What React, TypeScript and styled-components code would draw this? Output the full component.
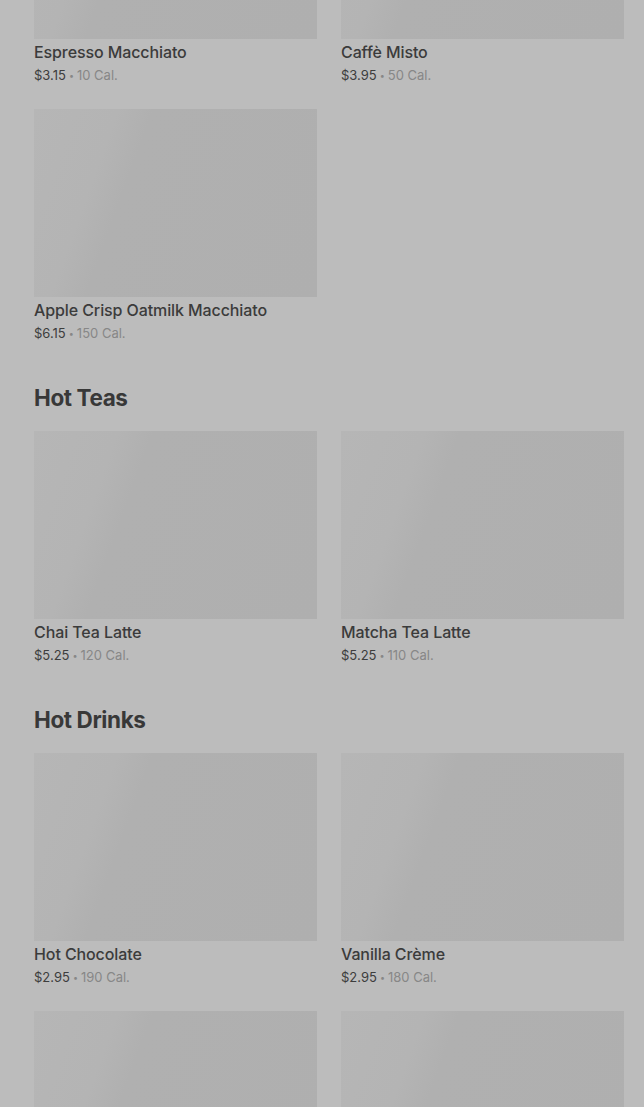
import styled, { createGlobalStyle } from 'styled-components';

type Item = { name: string; price: string; cal: string };
type Section = { title?: string; items: (Item | null)[] };

const sections: Section[] = [
  {
    items: [
      { name: 'Espresso Macchiato', price: '$3.15', cal: '10 Cal.' },
      { name: 'Caffè Misto', price: '$3.95', cal: '50 Cal.' },
      { name: 'Apple Crisp Oatmilk Macchiato', price: '$6.15', cal: '150 Cal.' },
    ],
  },
  {
    title: 'Hot Teas',
    items: [
      { name: 'Chai Tea Latte', price: '$5.25', cal: '120 Cal.' },
      { name: 'Matcha Tea Latte', price: '$5.25', cal: '110 Cal.' },
    ],
  },
  {
    title: 'Hot Drinks',
    items: [
      { name: 'Hot Chocolate', price: '$2.95', cal: '190 Cal.' },
      { name: 'Vanilla Crème', price: '$2.95', cal: '180 Cal.' },
      null,
      null,
    ],
  },
];

export default function App() {
  return (
    <>
      <GlobalStyle />
      <Page>
        <Menu>
          {sections.map((section, i) => (
            <Block key={i}>
              {section.title && <Heading>{section.title}</Heading>}
              <Grid>
                {section.items.map((item, j) => (
                  <Card key={j}>
                    <Thumb />
                    {item && (
                      <>
                        <Name>{item.name}</Name>
                        <Meta>
                          <Price>{item.price}</Price>
                          <Dot>•</Dot>
                          {item.cal}
                        </Meta>
                      </>
                    )}
                  </Card>
                ))}
              </Grid>
            </Block>
          ))}
        </Menu>
      </Page>
    </>
  );
}

const GlobalStyle = createGlobalStyle`
  html, body {
    margin: 0;
    height: 1107px;
    overflow: hidden;
    background: #bcbcbc;
  }
  body {
    font-family: Inter, "Noto Sans", "Liberation Sans", sans-serif;
    -webkit-font-smoothing: antialiased;
  }
`;

const Page = styled.div`
  padding: 0 20px 0 34px;
`;

// page is scrolled: the first row sits partly above the top edge
const Menu = styled.main`
  margin-top: -149px;
  display: flex;
  flex-direction: column;
  gap: 39px;
`;

const Block = styled.section`
  display: flex;
  flex-direction: column;
`;

const Heading = styled.h2`
  margin: 0 0 17px;
  font-size: 22.5px;
  line-height: 32px;
  font-weight: 700;
  letter-spacing: -0.4px;
  color: #383838;
`;

const Grid = styled.div`
  display: grid;
  grid-template-columns: 283px 283px;
  column-gap: 24px;
  row-gap: 24px;
`;

const Card = styled.div`
  display: flex;
  flex-direction: column;
`;

const Thumb = styled.div`
  height: 188px;
  background: linear-gradient(
    110deg,
    #b6b6b6 0%,
    #b4b4b4 24%,
    #b0b0b0 34%,
    #afafaf 100%
  );
`;

const Name = styled.div`
  margin-top: 4px;
  height: 19px;
  font-size: 16px;
  line-height: 19px;
  font-weight: 500;
  letter-spacing: -0.1px;
  color: #3b3b3b;
`;

const Meta = styled.div`
  margin-top: 3px;
  height: 20px;
  font-size: 13px;
  line-height: 20px;
  color: #878787;
`;

const Price = styled.span`
  color: #3d3d3d;
`;

const Dot = styled.span`
  margin: 0 3px;
  font-size: 9px;
  line-height: 0;
  vertical-align: 1px;
`;
